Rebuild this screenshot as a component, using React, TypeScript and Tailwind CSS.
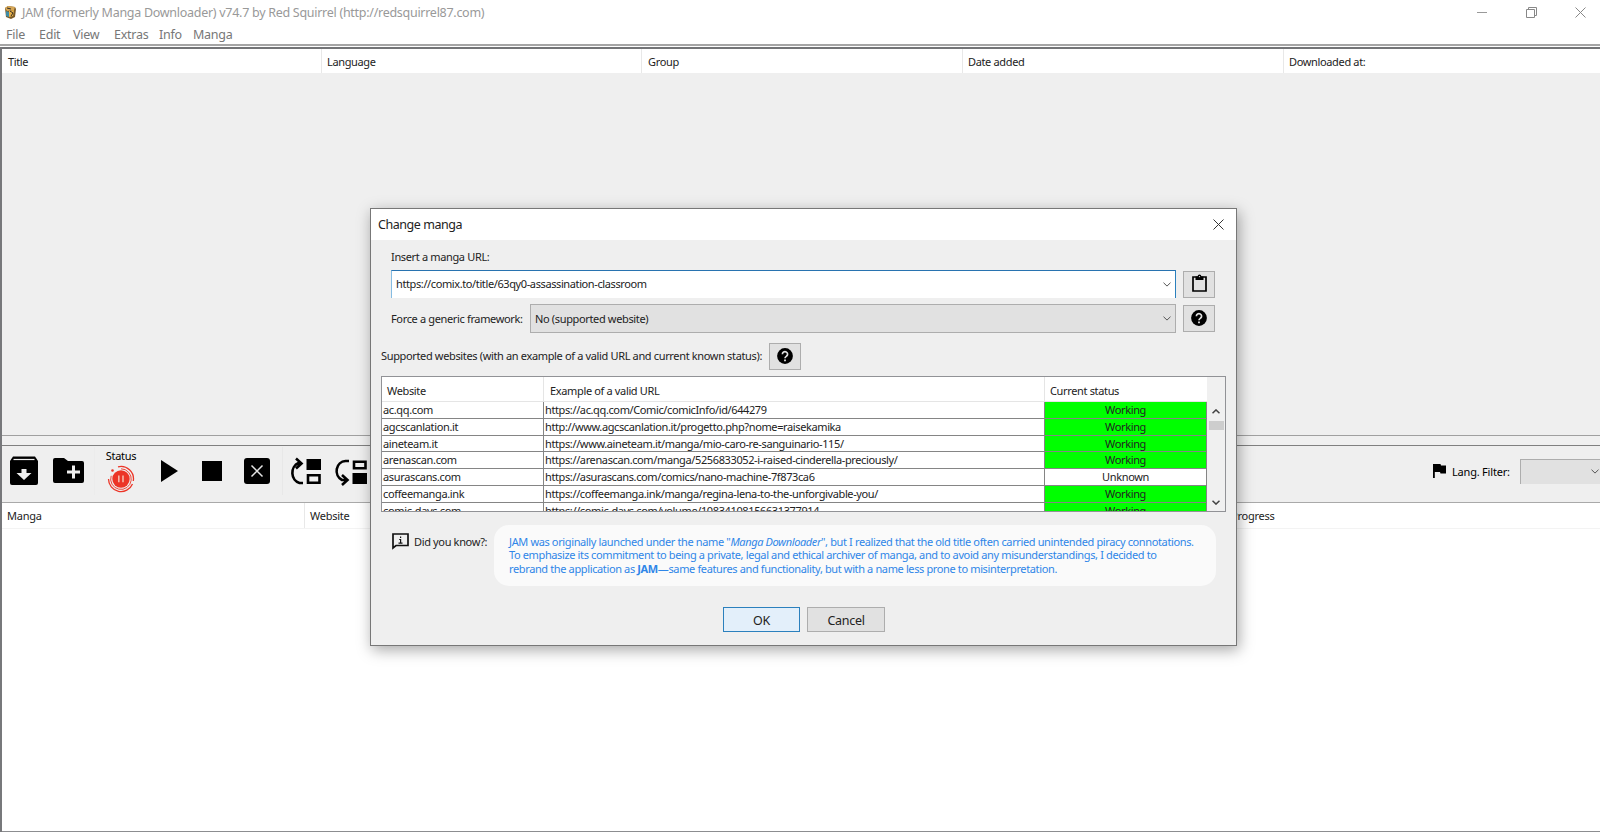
import React from 'react'

const sites = [
  { name: 'ac.qq.com', url: 'https://ac.qq.com/Comic/comicInfo/id/644279', status: 'Working' },
  { name: 'agcscanlation.it', url: 'http://www.agcscanlation.it/progetto.php?nome=raisekamika', status: 'Working' },
  { name: 'aineteam.it', url: 'https://www.aineteam.it/manga/mio-caro-re-sanguinario-115/', status: 'Working' },
  { name: 'arenascan.com', url: 'https://arenascan.com/manga/5256833052-i-raised-cinderella-preciously/', status: 'Working' },
  { name: 'asurascans.com', url: 'https://asurascans.com/comics/nano-machine-7f873ca6', status: 'Unknown' },
  { name: 'coffeemanga.ink', url: 'https://coffeemanga.ink/manga/regina-lena-to-the-unforgivable-you/', status: 'Working' },
  { name: 'comic-days.com', url: 'https://comic-days.com/volume/10834108156631377914', status: 'Working' },
]

const Chevron = ({ up = false, className = '' }: { up?: boolean; className?: string }) => (
  <svg viewBox="0 0 8 5" className={`w-2 h-[5px] shrink-0 ${className}`} fill="none" stroke="currentColor">
    <path d={up ? 'M.5 4.3 4 .9l3.500 3.4' : 'M.5.7 4 4.100 7.500.7'} />
  </svg>
)

const HelpIcon = () => (
  <svg viewBox="0 0 16 16" className="w-4 h-4">
    <circle cx="8" cy="8" r="7.900" />
    <path d="M5.400 6.300a2.600 2.500 0 1 1 4 2C8.500 8.900 8 9.200 8 10.300" fill="none" stroke="#e1e1e1" strokeWidth="1.700" />
    <path d="M7.100 11.500h1.800v1.800H7.100z" fill="#e1e1e1" />
  </svg>
)

const SquareButton = ({ children }: { children: React.ReactNode }) => (
  <button className="w-8 h-[27px] shrink-0 flex items-center justify-center pb-px border border-[#adadad] bg-[#e1e1e1]">{children}</button>
)

const TitleBar = () => (
  <div className="h-6 flex items-center pl-1 pr-[14px] text-[#999]">
    <svg viewBox="0 0 13 14" className="w-[13px] h-[14px]">
      <path d="M1 3 4 1l7 1 1 2-1 8-4 2-5-2z" fill="#7b5a27" />
      <path d="m1 3 3-2 7 1-1 3-7 1z" fill="#d7a756" />
      <path d="m2 6 3 1v5l-3-1z" fill="#3d8ca5" />
      <path d="m5 6 5-1-1 6-4 1z" fill="#e8b24b" />
      <path d="m6 6 3 2-2 3M3 3l4 1" stroke="#342d25" fill="none" />
    </svg>
    <span className="ml-[5px] text-[12.5px] tracking-[-0.28px]">JAM (formerly Manga Downloader) v74.7 by Red Squirrel (http://redsquirrel87.com)</span>
    <div className="ml-auto flex gap-[38px]">
      <svg viewBox="0 0 11 11" className="w-[11px] h-[11px]" stroke="#999"><path d="M0 5.500h10" /></svg>
      <svg viewBox="0 0 11 11" className="w-[11px] h-[11px]" stroke="#888" fill="none"><path d="M.5 2.500h8v8h-8zM2.500 2.500v-2h8v8h-2" /></svg>
      <svg viewBox="0 0 11 11" className="w-[11px] h-[11px]" stroke="#888"><path d="m.5.500 10 10m0-10-10 10" /></svg>
    </div>
  </div>
)

const MenuBar = () => (
  <div className="h-5 flex items-center pl-[6px] pt-px text-[12.5px] tracking-[-0.25px] text-[#777]">
    <span className="w-[33px]">File</span>
    <span className="w-[34px]">Edit</span>
    <span className="w-[41px]">View</span>
    <span className="w-[45px]">Extras</span>
    <span className="w-[34px]">Info</span>
    <span>Manga</span>
  </div>
)

const HistoryTable = () => (
  <div className="h-[389px] border-t-2 border-[#737477] bg-[#efefef] border-b border-b-[#a0a0a0]">
    <div className="h-6 flex bg-white text-[#222] leading-[25px]">
      <div className="w-[320px] pl-[6px] border-r border-[#e8e8e8]">Title</div>
      <div className="w-[320px] pl-[5px] border-r border-[#e8e8e8]">Language</div>
      <div className="w-[321px] pl-[6px] border-r border-[#e8e8e8]">Group</div>
      <div className="w-[321px] pl-[5px] border-r border-[#e8e8e8]">Date added</div>
      <div className="pl-[5px]">Downloaded at:</div>
    </div>
  </div>
)

const ArchiveIcon = () => (
  <svg viewBox="0 0 30 30" className="w-[30px] h-[30px]">
    <path d="M4 .5h22l3 4.500v22q0 2-2 2H3q-2 0-2-2V5z" />
    <path d="M4.500 3.500h21" stroke="#efefef" strokeWidth="1.200" />
    <path d="M12.500 13h5v4h5L15 24l-7.500-7h5z" fill="#efefef" />
  </svg>
)

const FolderIcon = () => (
  <svg viewBox="0 0 32 26" className="w-8 h-[26px]">
    <path d="M2 0h9l4 3h14q2 0 2 2v18q0 2-2 2H2q-2 0-2-2V2q0-2 2-2z" />
    <path d="M20.500 7.500v13M14 14h13" stroke="#efefef" strokeWidth="3" />
  </svg>
)

const StatusIcon = () => (
  <svg viewBox="0 0 28 28" className="w-7 h-7" fill="none" stroke="#ec3527">
    <circle cx="14" cy="14" r="8.700" fill="#ec3527" stroke="none" />
    <path d="M11 1.800A12.500 12.500 0 0 1 26.300 16M25.500 19A12.500 12.500 0 0 1 1.500 14" strokeWidth="1.300" />
    <path d="M14 3.800a10.300 10.300 0 1 1-9.800 7" strokeWidth=".9" />
    <circle cx="5.500" cy="5.500" r="1.300" fill="#ec3527" stroke="none" />
    <path d="M11.800 10.500v6.800M16 10.500v6.800" stroke="#f6b7a8" strokeWidth="1.600" />
  </svg>
)

const MoveUpIcon = () => (
  <svg viewBox="0 0 34 29" className="w-[34px] h-[29px]" fill="none" stroke="#000" strokeWidth="2.600">
    <path d="M16 26h-3.500A9.500 10.500 0 0 1 11.500 6H14M9 1.500l5.500 5L9 11.500" />
    <path d="M19.500 2H34v11H19.500z" fill="#000" stroke="none" />
    <path d="M21 18.200h11.500v7.500H21z" />
  </svg>
)

const MoveDownIcon = () => (
  <svg viewBox="0 0 34 29" className="w-[34px] h-[29px]" fill="none" stroke="#000" strokeWidth="2.600">
    <path d="M16 4h-3.500A9.500 10 0 0 0 9 23h5M9 18l5.500 5L9 28" />
    <path d="M21 4.800h11.500v6.500H21z" />
    <path d="M19.500 16H34v11H19.500z" fill="#000" stroke="none" />
  </svg>
)

const Toolbar = () => (
  <div className="h-14 flex items-center bg-[#efefef] pl-[7px] pb-[6px]">
    <ArchiveIcon />
    <div className="ml-[14px]"><FolderIcon /></div>
    <div className="ml-[9px] h-12 w-px bg-[#ececec]" />
    <div className="ml-[11px] w-[30px] flex flex-col items-center leading-[14px] -mt-px">
      <span className="tracking-[-0.25px] mb-[2px]">Status</span>
      <StatusIcon />
    </div>
    <svg viewBox="0 0 17 22" className="ml-[25px] w-[17px] h-[22px]"><path d="m0 0 17 11L0 22z" /></svg>
    <div className="ml-[24px] w-5 h-5 bg-black" />
    <svg viewBox="0 0 26 26" className="ml-[22px] w-[26px] h-[26px]">
      <rect width="26" height="26" rx="3" />
      <path d="m7.500 7.500 11 11m0-11-11 11" stroke="#e5e5e5" strokeWidth="1.500" />
    </svg>
    <div className="ml-[12px] h-12 w-px bg-[#e8e8e8]" />
    <div className="ml-[4px]"><MoveUpIcon /></div>
    <div className="ml-[12px]"><MoveDownIcon /></div>
    <div className="ml-auto flex items-center">
      <svg viewBox="0 0 13 14" className="w-[13px] h-[14px]"><path d="M0 0h7.500L8 1.500h5v8H7.500L7 8H1.800v6H0z" /></svg>
      <span className="ml-[6px] w-[68px] tracking-[-0.2px]">Lang. Filter:</span>
      <div className="w-20 h-[25px] flex items-center justify-end pr-px border-t border-l border-[#adadad] bg-[#e1e1e1] text-[#555]"><Chevron /></div>
    </div>
  </div>
)

const QueueTable = () => (
  <div className="flex-1 border-t border-t-[#a9a9a9] border-b border-b-[#8c8d90] bg-white">
    <div className="h-[26px] flex border-b border-[#f3f3f3] leading-[25px] text-[#222] tracking-[-0.25px]">
      <div className="w-[303px] pl-[5px] border-r border-[#e8e8e8]">Manga</div>
      <div className="w-[926px] pl-[5px]">Website</div>
      <div>Progress</div>
    </div>
  </div>
)

const SitesTable = () => (
  <div className="ml-[10px] mt-[6px] w-[845px] h-[136px] border border-[#919296] bg-white flex overflow-hidden">
    <div className="w-[825px]">
      <div className="h-[25px] flex leading-[27px] border-b border-[#e5e5e5]">
        <div className="w-[162px] pl-[5px] border-r border-[#e5e5e5]">Website</div>
        <div className="w-[501px] pl-[6px] border-r border-[#e5e5e5]">Example of a valid URL</div>
        <div className="pl-[5px]">Current status</div>
      </div>
      {sites.map((site) => (
        <div key={site.name} className="h-[16.75px] flex leading-[16px]">
          <div className="w-[162px] pl-px border-r border-b border-[#858585] tracking-[-0.35px]">{site.name}</div>
          <div className="w-[501px] pl-px border-r border-b border-[#858585] tracking-[-0.38px]">{site.url}</div>
          <div className={`w-[162px] text-center border-r border-b border-[#858585] ${site.status === 'Working' ? 'bg-[#00ff00]' : 'bg-white'}`}>{site.status}</div>
        </div>
      ))}
    </div>
    <div className="flex-1 flex flex-col items-center bg-[#f0f0f0] pt-8 text-[#444]">
      <Chevron up className="stroke-[1.5]" />
      <div className="mt-[7px] w-[15px] h-[9px] bg-[#cdcdcd]" />
      <Chevron className="mt-auto mb-[6px] stroke-[1.5]" />
    </div>
  </div>
)

const ChangeMangaDialog = () => (
  <div className="absolute left-[370px] top-[208px] w-[867px] h-[438px] border border-[#777] bg-[#efefef] shadow-[2px_4px_14px_rgba(0,0,0,0.35)] text-[#222]">
    <div className="h-[31px] flex items-center justify-between bg-white pl-[7px] pr-3 pb-px text-[12.5px] tracking-[-0.45px]">
      <span>Change manga</span>
      <svg viewBox="0 0 11 11" className="w-[11px] h-[11px]" stroke="#333"><path d="m.5.500 10 10m0-10-10 10" /></svg>
    </div>
    <div className="pl-5 mt-2 h-[22px] leading-[17px]">Insert a manga URL:</div>
    <div className="flex pl-5 h-7">
      <div className="w-[785px] flex items-center justify-between border-t border-r border-l border-t-[#2873b0] border-r-[#2b80bd] border-l-[#85bce2] bg-white pl-1 pr-[4px] text-[#555]">
        <span className="text-[#222] mb-[2px] tracking-[-0.39px]">https://comix.to/title/63qy0-assassination-classroom</span>
        <Chevron />
      </div>
      <div className="ml-[7px] mt-px">
        <SquareButton>
          <svg viewBox="0 0 15 18" className="w-[15px] h-[18px] -mt-[3px]">
            <path d="M1 3h13v14H1z" fill="none" stroke="#000" strokeWidth="1.700" />
            <path d="M3.500 2.500h2q.3-2 2-2t2 2h2V6h-8z" />
            <circle cx="7.500" cy="2.600" r=".7" fill="#e1e1e1" />
          </svg>
        </SquareButton>
      </div>
    </div>
    <div className="flex items-center pl-5 mt-[6px] h-[29px]">
      <span className="w-[139px]">Force a generic framework:</span>
      <div className="w-[646px] h-[29px] flex items-center justify-between border border-[#adadad] bg-[#e1e1e1] pl-1 pr-1 text-[#555]">
        <span className="text-[#222]">No (supported website)</span>
        <Chevron />
      </div>
      <div className="ml-[7px]"><SquareButton><HelpIcon /></SquareButton></div>
    </div>
    <div className="flex items-center pl-[10px] mt-[10px] h-[27px]">
      <span className="w-[388px] mb-[2px]">Supported websites (with an example of a valid URL and current known status):</span>
      <SquareButton><HelpIcon /></SquareButton>
    </div>
    <SitesTable />
    <div className="flex mt-[13px] pl-[21px] h-[61px]">
      <svg viewBox="0 0 17 17" className="w-[17px] h-[17px] mt-2 shrink-0">
        <path d="M1 1h15v11.500H4L1 15z" fill="none" stroke="#111" strokeWidth="1.700" />
        <path d="M8.600 3.500v1.400M7.200 6.500h1.400v3.500M6.500 10.200h4" fill="none" stroke="#111" strokeWidth="1.200" />
      </svg>
      <span className="ml-[5px] mt-2 w-[80px]">Did you know?:</span>
      <div className="w-[722px] rounded-[15px] bg-[#fafafa] pl-[15px] pt-[10px] leading-[13.400px] tracking-[-0.37px] text-[#2f86e8]">
        <div>JAM was originally launched under the name "<i>Manga Downloader</i>", but I realized that the old title often carried unintended piracy connotations.</div>
        <div>To emphasize its commitment to being a private, legal and ethical archiver of manga, and to avoid any misunderstandings, I decided to</div>
        <div>rebrand the application as <b>JAM</b>—same features and functionality, but with a name less prone to misinterpretation.</div>
      </div>
    </div>
    <div className="flex gap-[7px] mt-[21px] pl-[352px] text-[12.5px]">
      <button className="w-[77px] h-[25px] pt-px border border-[#2b80bd] bg-[#e3effa]">OK</button>
      <button className="w-[78px] h-[25px] pt-px border border-[#adadad] bg-[#e1e1e1] tracking-[-0.3px]">Cancel</button>
    </div>
  </div>
)

const App = () => {
  return (
    <div className="relative w-[1600px] h-[832px] overflow-hidden flex flex-col bg-white font-['Noto_Sans',sans-serif] text-[11px] tracking-[-0.35px] leading-[17px] whitespace-nowrap">
      <TitleBar />
      <MenuBar />
      <div className="h-[3px] border-t-2 border-[#a5a5a5] bg-white" />
      <div className="flex-1 flex flex-col border-l-2 border-[#77787b]">
        <HistoryTable />
        <div className="h-[10px] bg-[#f0f0f0] border-b border-[#808080]" />
        <Toolbar />
        <QueueTable />
      </div>
      <ChangeMangaDialog />
    </div>
  )
}

export default App
